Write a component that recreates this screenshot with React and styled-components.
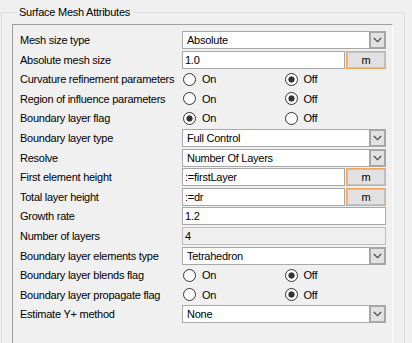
import React from "react";
import styled, { createGlobalStyle } from "styled-components";

const GlobalStyle = createGlobalStyle`
    html, body {
        margin: 0;
        padding: 0;
        background: #f0f0f0;
        overflow: hidden;
    }
    body {
        font-family: "Liberation Sans", Arial, sans-serif;
        font-size: 11px;
        letter-spacing: -0.25px;
        color: #000;
    }
`

const Group = styled.fieldset`
    box-sizing: border-box;
    width: 404px;
    min-height: 380px;
    margin: 5px 0 0 1px;
    padding: 5px 0 0 10px;
    border: 1px solid #dcdcdc;
`

const Title = styled.legend`
    margin-left: 5px;
    padding: 0 3px 0 2px;
    line-height: 14px;
    font-size: 11px;
`

const Panel = styled.div`
    box-sizing: border-box;
    width: 381px;
    padding: 6px 0 40px 7px;
    border-top: 1px solid #a0a0a0;
    border-left: 1px solid #a0a0a0;
    border-right: 1px solid #ffffff;
    border-bottom: 1px solid #ffffff;
    display: grid;
    grid-template-columns: 162px 204px;
    grid-auto-rows: 18px;
    row-gap: 1.6px;
    align-items: center;
`

const Label = styled.div`
    line-height: 18px;
    white-space: nowrap;
`

const Box = styled.div`
    box-sizing: border-box;
    height: 18px;
    border: 1px solid ${p => (p.$readonly ? "#bdbdbd" : "#a8a8a8")};
    background: ${p => (p.$readonly ? "#f0f0f0" : "#ffffff")};
    padding-left: ${p => p.$pad || 2}px;
    line-height: 16px;
    display: flex;
    align-items: center;
    white-space: nowrap;
`

const SelectBox = styled(Box)`
    padding-left: 4px;
    justify-content: space-between;
`

const Arrow = styled.div`
    box-sizing: border-box;
    width: 17px;
    height: 18px;
    margin: -1px -1px -1px 0;
    border: 2px solid #a6a6a6;
    background: #e1e1e1;
    display: flex;
    align-items: center;
    justify-content: center;
`

const UnitRow = styled.div`
    display: grid;
    grid-template-columns: 1fr 40px;
    column-gap: 1px;
`

const UnitButton = styled.div`
    box-sizing: border-box;
    height: 18px;
    border: 1px solid #f2a45c;
    box-shadow: inset 0 0 0 1px #c4c4c4;
    background: #e1e1e1;
    display: flex;
    align-items: center;
    justify-content: center;
    line-height: 16px;
`

const RadioRow = styled.div`
    display: grid;
    grid-template-columns: 1fr 1fr;
    padding-left: 1px;
`

const RadioOption = styled.div`
    display: flex;
    align-items: center;
    gap: 6px;
    line-height: 18px;
`

const Circle = styled.span`
    box-sizing: border-box;
    width: 13px;
    height: 13px;
    border-radius: 50%;
    border: 1px solid #333333;
    background: ${p =>
        p.$checked
            ? "radial-gradient(circle, #333 0 2.8px, #fff 3.4px)"
            : "#ffffff"};
`

const rows = [
    { label: "Mesh size type", type: "select", value: "Absolute" },
    { label: "Absolute mesh size", type: "unit", value: "1.0" },
    { label: "Curvature refinement parameters", type: "radio", on: false },
    { label: "Region of influence parameters", type: "radio", on: false },
    { label: "Boundary layer flag", type: "radio", on: true },
    { label: "Boundary layer type", type: "select", value: "Full Control" },
    { label: "Resolve", type: "select", value: "Number Of Layers" },
    { label: "First element height", type: "unit", value: ":=firstLayer" },
    { label: "Total layer height", type: "unit", value: ":=dr" },
    { label: "Growth rate", type: "text", value: "1.2" },
    { label: "Number of layers", type: "readonly", value: "4" },
    { label: "Boundary layer elements type", type: "select", value: "Tetrahedron" },
    { label: "Boundary layer blends flag", type: "radio", on: false },
    { label: "Boundary layer propagate flag", type: "radio", on: false },
    { label: "Estimate Y+ method", type: "select", value: "None" },
]

function Chevron() {
    return (
        <svg width="9" height="6" viewBox="0 0 9 6">
            <polyline points="0.8,1 4.5,4.6 8.2,1" fill="none" stroke="#4a4a4a" strokeWidth="1.2" />
        </svg>
    )
}

function Control({ row }) {
    switch (row.type) {
        case "select":
            return (
                <SelectBox>
                    <span>{row.value}</span>
                    <Arrow><Chevron /></Arrow>
                </SelectBox>
            )
        case "unit":
            return (
                <UnitRow>
                    <Box>{row.value}</Box>
                    <UnitButton>m</UnitButton>
                </UnitRow>
            )
        case "radio":
            return (
                <RadioRow>
                    <RadioOption><Circle $checked={row.on} />On</RadioOption>
                    <RadioOption><Circle $checked={!row.on} />Off</RadioOption>
                </RadioRow>
            )
        case "readonly":
            return <Box $readonly>{row.value}</Box>
        default:
            return <Box>{row.value}</Box>
    }
}

export default function App() {
    return (
        <>
            <GlobalStyle />
            <Group>
                <Title>Surface Mesh Attributes</Title>
                <Panel>
                    {rows.map(row => (
                        <React.Fragment key={row.label}>
                            <Label>{row.label}</Label>
                            <Control row={row} />
                        </React.Fragment>
                    ))}
                </Panel>
            </Group>
        </>
    )
}
